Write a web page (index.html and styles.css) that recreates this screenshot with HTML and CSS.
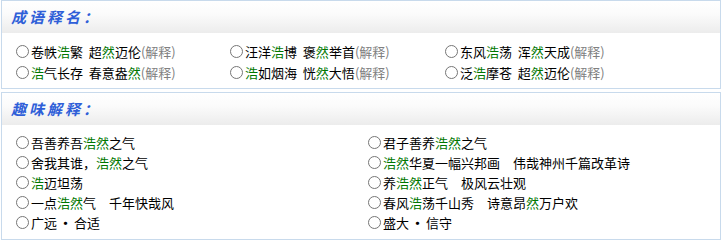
FILE: index.html
```html
<!DOCTYPE html>
<html lang="zh-CN">
<head>
    <meta charset="UTF-8">
    <title>浩然</title>
    <link rel="stylesheet" href="styles.css">
</head>
<body>
    <div class="box">
        <div class="box-hd">成语释名：</div>
        <ul class="box-bd list3">
            <li><input type="radio" name="cy">卷帙<em>浩</em>繁&nbsp; 超<em>然</em>迈伦<a class="jieshi">(解释)</a></li>
            <li><input type="radio" name="cy">汪洋<em>浩</em>博&nbsp; 褒<em>然</em>举首<a class="jieshi">(解释)</a></li>
            <li><input type="radio" name="cy">东风<em>浩</em>荡&nbsp; 浑<em>然</em>天成<a class="jieshi">(解释)</a></li>
            <li><input type="radio" name="cy"><em>浩</em>气长存&nbsp; 春意盎<em>然</em><a class="jieshi">(解释)</a></li>
            <li><input type="radio" name="cy"><em>浩</em>如烟海&nbsp; 恍<em>然</em>大悟<a class="jieshi">(解释)</a></li>
            <li><input type="radio" name="cy">泛<em>浩</em>摩苍&nbsp; 超<em>然</em>迈伦<a class="jieshi">(解释)</a></li>
        </ul>
    </div>
    <div class="box box2">
        <div class="box-hd">趣味解释：</div>
        <ul class="box-bd list2">
            <li><input type="radio" name="qw">吾善养吾<em>浩然</em>之气</li>
            <li><input type="radio" name="qw">君子善养<em>浩然</em>之气</li>
            <li><input type="radio" name="qw">舍我其谁，<em>浩然</em>之气</li>
            <li><input type="radio" name="qw"><em>浩然</em>华夏一幅兴邦画　伟哉神州千篇改革诗</li>
            <li><input type="radio" name="qw"><em>浩</em>迈坦荡</li>
            <li><input type="radio" name="qw">养<em>浩然</em>正气　极风云壮观</li>
            <li><input type="radio" name="qw">一点<em>浩然</em>气　千年快哉风</li>
            <li><input type="radio" name="qw">春风<em>浩</em>荡千山秀　诗意昂<em>然</em>万户欢</li>
            <li><input type="radio" name="qw">广远<b class="dot">•</b>合适</li>
            <li><input type="radio" name="qw">盛大<b class="dot">•</b>信守</li>
        </ul>
    </div>
</body>
</html>
```

FILE: styles.css
```css
body{
    margin:0;
    font-family:"Noto Sans CJK SC","Noto Sans",sans-serif;
    font-size:13px;
    color:#000;
}
ul{
    list-style:none;
    padding:0;
    margin:0;
}
em{
    font-style:normal;
    color:#007700;
}
.box{
    width:718px;
    margin:0 1px;
    border:1px solid #c8daec;
}
.box2{
    margin-top:3px;
}
.box-hd{
    height:32px;
    line-height:32px;
    padding-left:9px;
    background:linear-gradient(#ffffff 0%,#fbfbfb 40%,#ececec 100%);
    color:#2f5fd8;
    font-size:15px;
    font-weight:bold;
    font-style:italic;
    letter-spacing:3px;
}
.box-bd{
    display:grid;
    padding:8px 0 5px 14px;
}
.box-bd li{
    display:flex;
    align-items:center;
    white-space:nowrap;
}
.box-bd input{
    width:13px;
    height:13px;
    margin:0 2px 0 0;
}
/* 成语 三列 */
.list3{
    grid-template-columns:214px 215px 215px;
    grid-auto-rows:21px;
}
/* 趣味 两列 */
.list2{
    grid-template-columns:352px 352px;
    grid-auto-rows:20px;
    padding-top:7px;
    padding-bottom:7px;
}
.jieshi{
    color:#808080;
    cursor:pointer;
}
.dot{
    font-size:13px;
    margin:0 2px;
}
```
